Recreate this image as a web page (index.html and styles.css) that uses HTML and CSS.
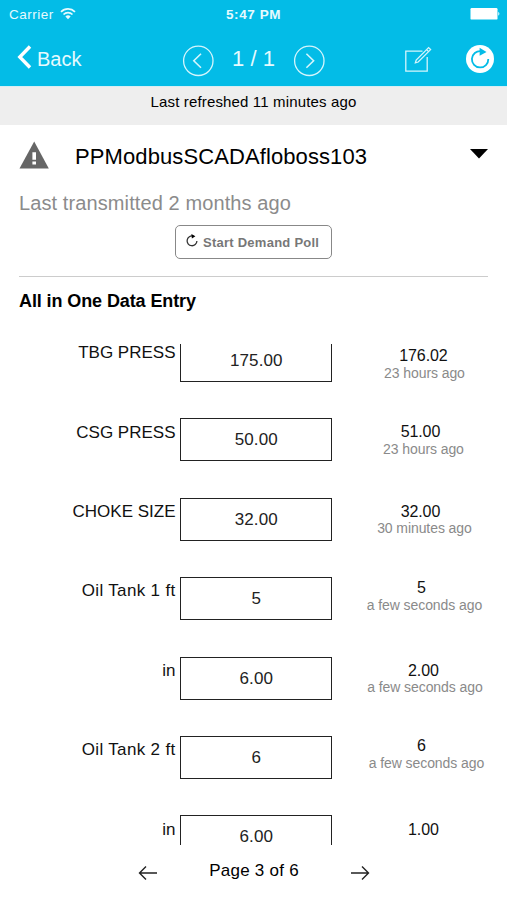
FILE: index.html
```html
<!DOCTYPE html>
<html lang="en">
<head>
<meta charset="utf-8">
<title>Data Entry</title>
<link rel="stylesheet" href="styles.css">
</head>
<body>
<header class="top">
  <div class="status">
    <span class="carrier">Carrier</span>
    <svg class="wifi" width="16" height="13" viewBox="0 0 16 13" fill="none" stroke="#e6fafe" stroke-width="1.7"><path d="M1 4.8a10 10 0 0 1 14 0M3.5 7.5a6.4 6.4 0 0 1 9 0"/><path d="M5.4 9.6a3.7 3.7 0 0 1 5.2 0L8 12.2z" fill="#e6fafe" stroke="none"/></svg>
    <span class="clock">5:47 PM</span>
    <svg class="battery" width="31" height="12" viewBox="0 0 31 12" fill="#fff"><rect x=".5" y="0" width="27" height="11.6" rx="1.2"/><path d="M28.3 3.8q2.2 2 0 4z"/></svg>
  </div>
  <nav class="nav">
    <a class="back"><svg width="15" height="24" viewBox="0 0 15 24" fill="none" stroke="#fff" stroke-width="3.4"><path d="M13 1.5 2.8 12 13 22.5"/></svg><span>Back</span></a>
    <div class="pager">
      <svg width="32" height="32" viewBox="0 0 32 32" fill="none" stroke="#d5f5fc" stroke-width="1.3"><circle cx="16.3" cy="15.8" r="14.7"/><path d="m19 8.8-7.2 7 7.2 7" stroke-width="1.6"/></svg>
      <span class="count">1 / 1</span>
      <svg width="32" height="32" viewBox="0 0 32 32" fill="none" stroke="#d5f5fc" stroke-width="1.3"><circle cx="16.3" cy="15.8" r="14.7"/><path d="m13.4 8.8 7.2 7-7.2 7" stroke-width="1.6"/></svg>
    </div>
    <svg class="edit" width="28" height="27" viewBox="0 0 28 27" fill="none" stroke="#d5f5fc" stroke-width="1.3"><path d="M18.5 5.2H1.8v20h21.4V11"/><path d="m11.4 16.8.8-2.8L24.6 1.6l2 2L14.2 16zM22.6 3.6l2 2"/></svg>
    <svg class="reload" width="28" height="28" viewBox="0 0 28 28"><circle cx="14" cy="14" r="14" fill="#fff"/><path d="M15 6.1A8.2 8.2 0 1 0 22.3 14" fill="none" stroke="#03bce7" stroke-width="1.8"/><path d="M13.6 2.8 20.5 7l-6.9 3.8z" fill="#03bce7"/></svg>
  </nav>
</header>
<div class="refreshed">Last refreshed 11 minutes ago</div>
<main>
  <div class="device">
    <svg class="warn" width="30" height="28" viewBox="0 0 30 28"><path d="M15.2.5 29.8 27.5H.5z" fill="#666"/><path d="M13.4 11.2H17v7.6h-3.6zM13.4 20.4H17v3.2h-3.6z" fill="#fff"/></svg>
    <h1>PPModbusSCADAfloboss103</h1>
    <svg class="caret" width="18" height="10" viewBox="0 0 18 10"><path d="M0 0h18L9 9.5z"/></svg>
  </div>
  <p class="transmitted">Last transmitted 2 months ago</p>
  <button class="poll"><svg width="12" height="13" viewBox="0 0 12 13"><path d="M7.2 2.1A4.9 4.9 0 1 0 10.9 7" fill="none" stroke="#333" stroke-width="1.3"/><path d="M5.4 0 9.4 2.2 5.9 4.6z"/></svg><span>Start Demand Poll</span></button>
  <h2>All in One Data Entry</h2>
</main>
<section class="list">
  <div class="row"><label>TBG PRESS</label><div class="field">175.00</div><div class="reading"><b>176.02</b><small>23 hours ago</small></div></div>
  <div class="row"><label>CSG PRESS</label><div class="field">50.00</div><div class="reading"><b>51.00</b><small>23 hours ago</small></div></div>
  <div class="row"><label>CHOKE SIZE</label><div class="field">32.00</div><div class="reading"><b>32.00</b><small>30 minutes ago</small></div></div>
  <div class="row"><label class="tank">Oil Tank 1 ft</label><div class="field">5</div><div class="reading"><b>5</b><small>a few seconds ago</small></div></div>
  <div class="row"><label>in</label><div class="field">6.00</div><div class="reading"><b>2.00</b><small>a few seconds ago</small></div></div>
  <div class="row"><label class="tank">Oil Tank 2 ft</label><div class="field">6</div><div class="reading"><b>6</b><small>a few seconds ago</small></div></div>
  <div class="row"><label>in</label><div class="field">6.00</div><div class="reading"><b>1.00</b></div></div>
</section>
<footer class="pages">
  <svg width="20" height="14" viewBox="0 0 20 14" fill="none" stroke="#222" stroke-width="1.4"><path d="M19 7H1.5M8 .5 1.5 7 8 13.5"/></svg>
  <span>Page 3 of 6</span>
  <svg width="20" height="14" viewBox="0 0 20 14" fill="none" stroke="#222" stroke-width="1.4"><path d="M1 7h17.5M12 .5 18.5 7 12 13.5"/></svg>
</footer>
</body>
</html>
```
FILE: styles.css
```css
* { box-sizing: border-box; }
body { margin: 0; height: 900px; overflow: hidden; background: #fff; color: #000; font-family: "Liberation Sans", Arial, sans-serif; }
svg { display: block; flex: none; }
h1, h2, p { margin: 0; font-weight: normal; white-space: nowrap; }

.top { height: 86px; background: #03bce7; color: #e6fafe; }
.status { height: 28px; display: grid; grid-template-columns: 51px 175px 1fr 37px; align-items: center; padding-left: 9px; font-size: 13.5px; }
.carrier { letter-spacing: .5px; }
.wifi { justify-self: start; margin-top: -2px; }
.clock { margin-left: -9px; font-weight: bold; font-size: 13.5px; letter-spacing: .6px; }
.nav { height: 58px; display: flex; align-items: flex-start; padding: 17px 0 0 17px; }
.back { display: flex; gap: 5px; width: 165px; font-size: 20px; line-height: 24px; }
.back span { padding-top: 2px; }
.pager { display: flex; width: 222px; }
.count { width: 79px; text-align: center; font-size: 22px; line-height: 26px; padding-top: 1px; }
.edit { margin-top: 1px; }
.reload { margin: 0 0 0 34px; }

.refreshed { height: 39px; padding-top: 6px; background: #eee; border-top: 1px solid #d6eef4; text-align: center; font-size: 15px; line-height: 17px; letter-spacing: .15px; }

main { height: 219px; padding: 0 19px; }
.device { height: 65px; display: flex; align-items: flex-start; padding-top: 16px; }
.device h1 { flex: 1; margin-left: 26px; font-size: 22px; line-height: 32px; letter-spacing: .1px; }
.caret { margin-top: 8px; }
.transmitted { height: 35px; color: #8b8b8b; font-size: 20px; line-height: 26px; letter-spacing: .1px; }
.poll { display: flex; align-items: center; gap: 5px; width: 157px; height: 34px; margin: 0 0 0 156px; padding: 0 0 0 10px; border: 1px solid #888; border-radius: 5px; background: #fff; color: #777; font: bold 13px "Liberation Sans", Arial, sans-serif; letter-spacing: .25px; white-space: nowrap; }
.poll svg { margin-top: -3px; }
h2 { margin-top: 17px; padding-top: 14px; border-top: 1px solid #ccc; font-size: 18px; line-height: 20px; font-weight: bold; letter-spacing: -.1px; }

.list { height: 501px; overflow: hidden; }
.row { display: grid; grid-template-columns: 175.5px 152px 165px; column-gap: 4.8px; height: 79.4px; align-items: start; }
.row:first-child { margin-top: -5px; }
label { text-align: right; font-size: 17px; line-height: 20px; padding-top: 4.3px; color: #111; }
.tank { letter-spacing: .33px; }
.field { height: 43px; border: 1px solid #222; text-align: center; font-size: 17px; line-height: 41px; letter-spacing: .1px; color: #222; }
.reading { display: flex; flex-direction: column; text-align: center; margin-left: 7.2px; margin-right: -2.5px; padding-top: 4.2px; }
.reading b { font-weight: normal; font-size: 16px; line-height: 18px; margin-left: -8px; letter-spacing: -.1px; color: #111; }
.reading small { font-size: 14px; line-height: 16px; letter-spacing: -.08px; color: #8a8a8a; }
.row:nth-child(1) .reading { padding-top: 7.6px; }
.row:nth-child(3) .reading { padding-top: 5px; }
.row:nth-child(3) small { margin-top: -1px; }
.row:nth-child(1) b, .row:nth-child(5) b, .row:nth-child(7) b { margin-left: -2px; }
.row:nth-child(4) b, .row:nth-child(6) b { margin-left: -6px; }
.row:nth-child(2) small { margin-left: -2px; }
.row:nth-child(4) .reading { padding-top: 1.6px; }
.row:nth-child(5) .reading { padding-top: 5.4px; }
.row:nth-child(5) small { margin: -1.4px 0 0 1px; }
.row:nth-child(6) .reading { padding-top: .8px; }
.row:nth-child(6) small { margin-left: 4px; }
.row:nth-child(7) .reading { padding-top: 6px; }

.pages { display: flex; align-items: flex-start; padding: 15px 0 0 138px; font-size: 17px; line-height: 20px; letter-spacing: .25px; }
.pages span { width: 192px; padding-top: 1px; text-align: center; }
.pages svg { margin-top: 6px; }
```
